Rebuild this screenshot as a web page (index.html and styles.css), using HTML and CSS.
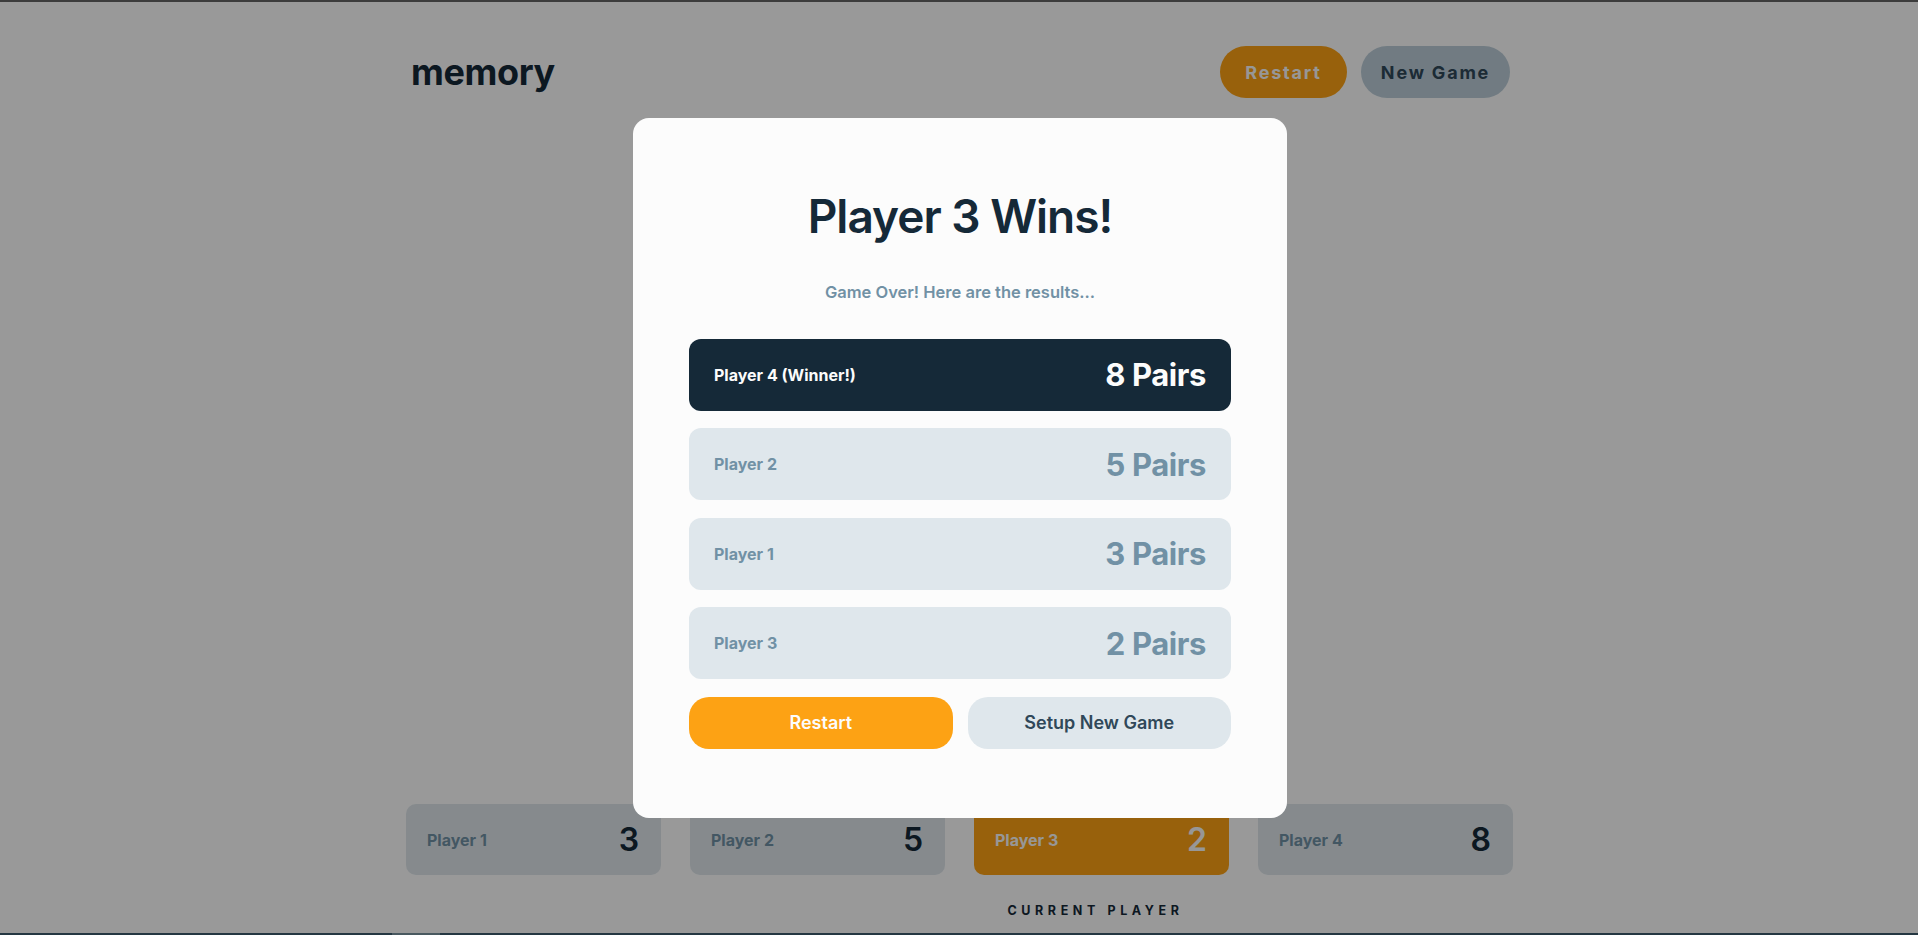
FILE: index.html
```html
<!DOCTYPE html>
<html lang="en">
<head>
<meta charset="utf-8">
<title>memory</title>
<link rel="stylesheet" href="styles.css">
</head>
<body>
<div class="page">
  <header class="header">
    <h1 class="logo">memory</h1>
    <nav class="header-actions">
      <button class="pill pill-orange">Restart</button>
      <button class="pill pill-gray">New Game</button>
    </nav>
  </header>

  <main class="board"></main>

  <section class="players">
    <div class="player-slot">
      <div class="player-card"><span class="player-name">Player 1</span><span class="player-score">3</span></div>
    </div>
    <div class="player-slot">
      <div class="player-card"><span class="player-name">Player 2</span><span class="player-score">5</span></div>
    </div>
    <div class="player-slot">
      <div class="player-card active"><span class="player-name">Player 3</span><span class="player-score">2</span></div>
      <div class="current-label">CURRENT PLAYER</div>
    </div>
    <div class="player-slot">
      <div class="player-card"><span class="player-name">Player 4</span><span class="player-score">8</span></div>
    </div>
  </section>

  <div class="bottom-strip"><span class="strip-thumb"></span></div>
</div>

<div class="overlay">
  <div class="modal">
    <h2 class="modal-title">Player 3 Wins!</h2>
    <p class="modal-sub">Game Over! Here are the results…</p>
    <ul class="results">
      <li class="result winner"><span class="result-name">Player 4 (Winner!)</span><span class="result-pairs">8 Pairs</span></li>
      <li class="result"><span class="result-name">Player 2</span><span class="result-pairs">5 Pairs</span></li>
      <li class="result"><span class="result-name">Player 1</span><span class="result-pairs">3 Pairs</span></li>
      <li class="result"><span class="result-name">Player 3</span><span class="result-pairs">2 Pairs</span></li>
    </ul>
    <div class="modal-actions">
      <button class="btn btn-orange">Restart</button>
      <button class="btn btn-light">Setup New Game</button>
    </div>
  </div>
</div>
</body>
</html>
```

FILE: styles.css
```css
* { box-sizing: border-box; }

html, body {
  margin: 0;
  padding: 0;
  height: 100%;
}

body {
  background: #ffffff;
  font-family: Inter, "Noto Sans", "Liberation Sans", sans-serif;
  color: #152938;
  overflow: hidden;
}

.page {
  height: 100vh;
  display: flex;
  flex-direction: column;
  border-top: 2px solid #646464;
}

.header {
  width: 1110px;
  margin: 44px auto 0;
  display: flex;
  align-items: center;
  justify-content: space-between;
  padding: 0 4px 0 7px;
}

.logo {
  margin: 0;
  font-size: 36px;
  font-weight: 700;
  letter-spacing: -0.4px;
  color: #152938;
  line-height: 52px;
}

.header-actions {
  display: flex;
  gap: 14px;
}

.pill {
  height: 52px;
  border: none;
  border-radius: 26px;
  font-family: inherit;
  font-size: 18px;
  font-weight: 700;
  letter-spacing: 1.8px;
  padding: 0;
}

.pill-orange {
  width: 127px;
  background: #FDA214;
  color: #FCFCFC;
}

.pill-gray {
  width: 149px;
  background: #BCCED9;
  color: #304859;
}

.board {
  flex: 1;
}

.players {
  width: 1110px;
  margin: 0 auto;
  display: grid;
  grid-template-columns: repeat(4, 1fr);
  gap: 29px;
  padding: 0 1px 0 2px;
}

.player-slot {
  display: flex;
  flex-direction: column;
  align-items: center;
}

.player-card {
  width: 100%;
  height: 71px;
  border-radius: 10px;
  background: #DFE7EC;
  display: flex;
  align-items: center;
  justify-content: space-between;
  padding: 0 22px 0 21px;
}

.player-name {
  font-size: 16px;
  font-weight: 700;
  color: #7191A5;
}

.player-score {
  font-size: 32px;
  font-weight: 600;
  color: #152938;
}

.player-card.active {
  background: #FDA214;
}

.player-card.active .player-name,
.player-card.active .player-score {
  color: #FCFCFC;
}

.current-label {
  margin-top: 28px;
  margin-right: 12px;
  font-size: 12.5px;
  line-height: 16px;
  font-weight: 700;
  letter-spacing: 4.6px;
  color: #152938;
}

.bottom-strip {
  margin-top: 14px;
  height: 2px;
  background: #3c5d6e;
  display: flex;
}

.strip-thumb {
  margin-left: 392px;
  width: 48px;
  background: #7b95a0;
}

/* Modal */
.overlay {
  position: fixed;
  inset: 0;
  background: rgba(0, 0, 0, 0.4);
  display: flex;
  align-items: center;
  justify-content: center;
}

.modal {
  width: 654px;
  background: #FCFCFC;
  border-radius: 16px;
  padding: 69px 56px;
  display: flex;
  flex-direction: column;
  align-items: stretch;
  margin-left: 2px;
}

.modal-title {
  margin: 0;
  text-align: center;
  font-size: 46px;
  line-height: 58px;
  font-weight: 600;
  letter-spacing: -1px;
  color: #152938;
}

.modal-sub {
  margin: 36px 0 0;
  text-align: center;
  font-size: 16.5px;
  line-height: 22px;
  font-weight: 600;
  color: #7191A5;
}

.results {
  list-style: none;
  margin: 36px 0 0;
  padding: 0;
  display: flex;
  flex-direction: column;
  gap: 17.5px;
}

.result {
  height: 72px;
  border-radius: 12px;
  background: #DFE7EC;
  display: flex;
  align-items: center;
  justify-content: space-between;
  padding: 0 25px 0 25px;
}

.result-name {
  font-size: 16px;
  font-weight: 700;
  color: #7191A5;
}

.result-pairs {
  font-size: 31px;
  font-weight: 700;
  color: #7191A5;
  letter-spacing: -0.4px;
}

.result.winner {
  background: #152938;
}

.result.winner .result-name,
.result.winner .result-pairs {
  color: #FCFCFC;
}

.modal-actions {
  margin-top: 17.5px;
  display: grid;
  grid-template-columns: 1fr 1fr;
  gap: 15px;
}

.btn {
  height: 52px;
  border: none;
  border-radius: 20px;
  font-family: inherit;
  font-size: 18px;
  font-weight: 600;
  padding: 0;
}

.btn-orange {
  background: #FDA214;
  color: #FCFCFC;
}

.btn-light {
  background: #DFE7EC;
  color: #304859;
}
```
